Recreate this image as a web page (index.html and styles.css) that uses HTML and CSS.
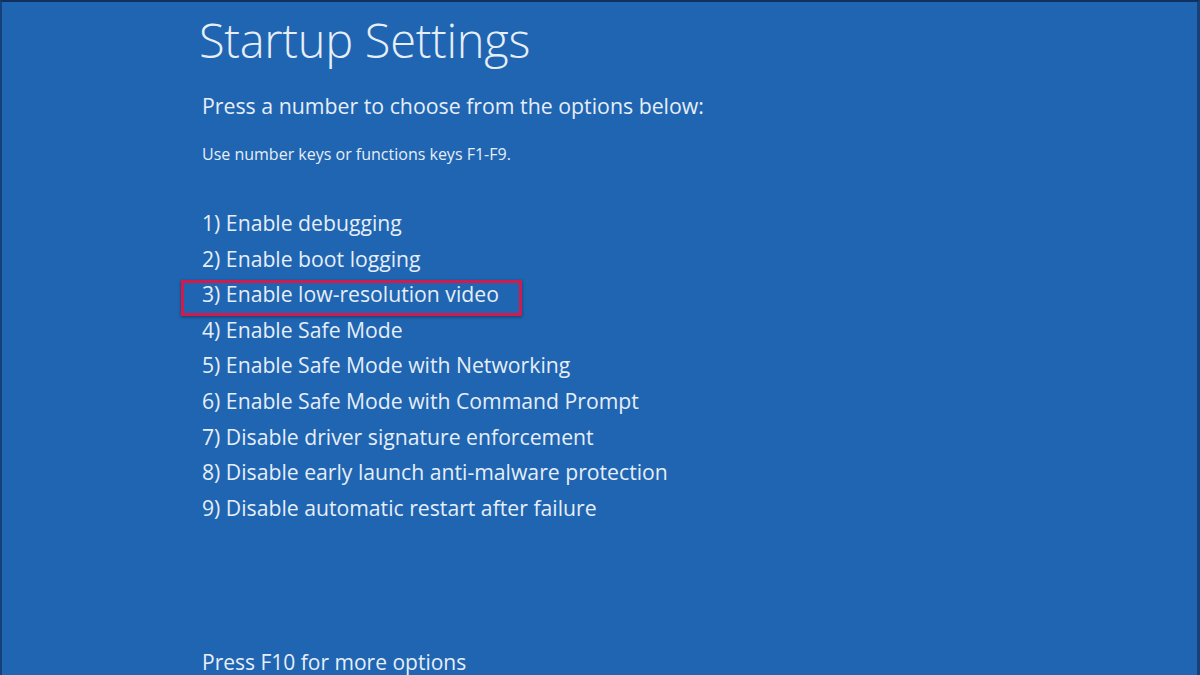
FILE: index.html
```html
<!DOCTYPE html>
<html lang="en">
<head>
<meta charset="utf-8">
<title>Startup Settings</title>
<link rel="stylesheet" href="styles.css">
</head>
<body>
<div class="screen">
  <main class="content">
    <h1 class="title">Startup Settings</h1>
    <p class="lead">Press a number to choose from the options below:</p>
    <p class="hint">Use number keys or functions keys F1-F9.</p>
    <ol class="options">
      <li class="option">1) Enable debugging</li>
      <li class="option">2) Enable boot logging</li>
      <li class="option option-selected">3) Enable low-resolution video</li>
      <li class="option">4) Enable Safe Mode</li>
      <li class="option">5) Enable Safe Mode with Networking</li>
      <li class="option">6) Enable Safe Mode with Command Prompt</li>
      <li class="option">7) Disable driver signature enforcement</li>
      <li class="option">8) Disable early launch anti-malware protection</li>
      <li class="option">9) Disable automatic restart after failure</li>
    </ol>
    <p class="footer">Press F10 for more options</p>
  </main>
</div>
</body>
</html>
```
FILE: styles.css
```css
html, body {
  margin: 0;
  padding: 0;
  width: 1200px;
  height: 675px;
  overflow: hidden;
}

body {
  background: #1e64b0;
  font-family: "Open Sans", "Noto Sans", sans-serif;
  color: #e6eef8;
}

.screen {
  width: 1200px;
  height: 675px;
  box-sizing: border-box;
  border-top: 2px solid #10305f;
  border-left: 2px solid #15407a;
  border-right: 3px solid #15407a;
  background: #1f65b1;
}

.content {
  height: 100%;
  box-sizing: border-box;
  padding-left: 197px;
  display: flex;
  flex-direction: column;
}

.title {
  margin: 8px 0 0 0;
  font-weight: 300;
  font-size: 47px;
  line-height: 60px;
  letter-spacing: -0.3px;
}

.lead {
  margin: 21px 0 0 3px;
  font-size: 21.3px;
  line-height: 30px;
}

.hint {
  margin: 23px 0 0 3px;
  font-size: 16px;
  line-height: 20px;
}

.options {
  list-style: none;
  margin: 41px 0 0 0;
  padding: 0 0 0 3px;
  display: flex;
  flex-direction: column;
}

.option {
  font-size: 21.2px;
  line-height: 35.6px;
  width: max-content;
}

.option-selected {
  position: relative;
}

.option-selected::after {
  content: "";
  position: absolute;
  left: -21px;
  right: -23px;
  top: 4px;
  bottom: -4px;
  border: 3px solid #d21b4c;
  box-shadow: 0 1px 3px rgba(0, 0, 0, 0.4);
}

.footer {
  margin: auto 0 1px 3px;
  font-size: 21px;
  line-height: 24px;
}
```
